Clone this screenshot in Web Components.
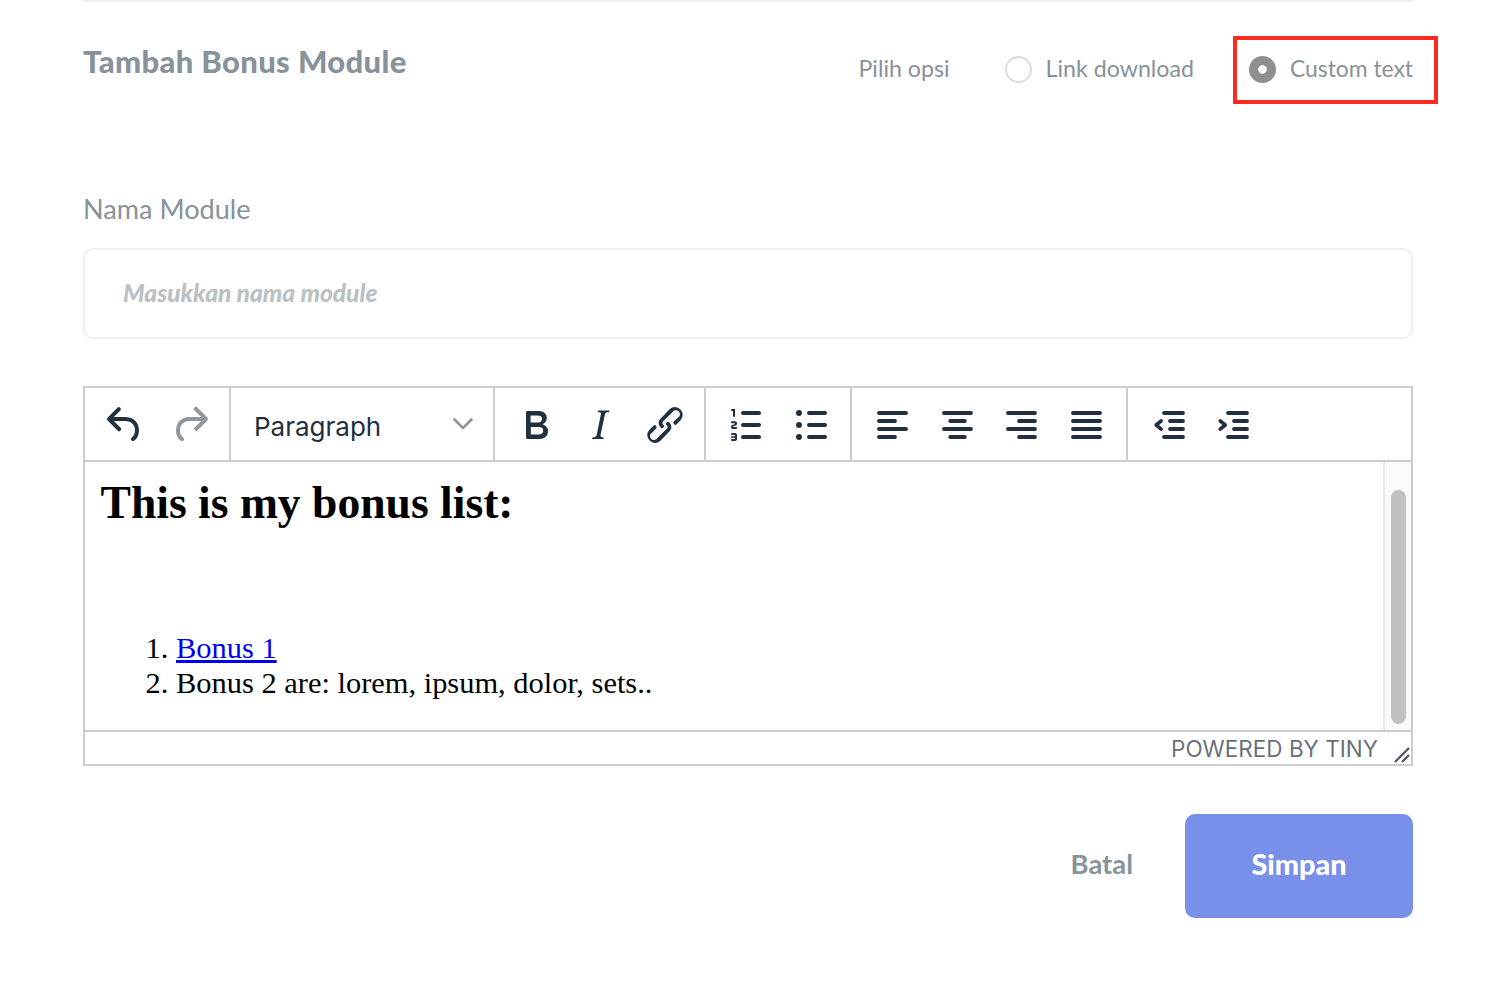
<!DOCTYPE html>
<html lang="id">
<head>
<meta charset="utf-8">
<title>Tambah Bonus Module</title>
<style>
  html, body { margin: 0; background: #fff; overflow: hidden; }
  body { font-family: Lato, "Liberation Sans", sans-serif; }
</style>
</head>
<body>
<bonus-form></bonus-form>

<script>
const ICONS = {
  undo: '<path d="M6.4 8H12c3.7 0 6.2 2 6.8 5.1.6 2.7-.4 5.6-2.3 6.8a1 1 0 0 1-1-1.8c1.1-.6 1.8-2.7 1.4-4.6-.5-2.1-2.1-3.5-4.9-3.5H6.4l3.3 3.3a1 1 0 1 1-1.4 1.4l-5-5a1 1 0 0 1 0-1.4l5-5a1 1 0 0 1 1.4 1.4L6.4 8z"/>',
  redo: '<path d="M17.6 10H12c-2.8 0-4.4 1.4-4.9 3.5-.4 2 .3 4 1.4 4.6a1 1 0 1 1-1 1.8c-2-1.2-2.9-4.1-2.3-6.8.6-3 3-5.1 6.8-5.1h5.6l-3.3-3.3a1 1 0 1 1 1.4-1.4l5 5a1 1 0 0 1 0 1.4l-5 5a1 1 0 0 1-1.4-1.4l3.3-3.3z"/>',
  bold: '<path d="M7.8 19c-.3 0-.5 0-.6-.2l-.2-.5V5.7c0-.2 0-.4.2-.5l.6-.2h5c1.5 0 2.7.3 3.5 1 .7.6 1.1 1.4 1.1 2.5a3 3 0 0 1-.6 1.9c-.4.6-1 1-1.6 1.2.4.1.9.3 1.3.6s.8.7 1 1.2c.4.4.5 1 .5 1.6 0 1.3-.4 2.3-1.3 3-.8.7-2.1 1-3.8 1H7.8zm5-8.3c.6 0 1.2-.1 1.6-.5.4-.3.6-.7.6-1.3 0-1.1-.8-1.7-2.3-1.7H9.3v3.5h3.4zm.5 6c.7 0 1.3-.1 1.7-.4.4-.4.6-.9.6-1.5s-.2-1-.7-1.4c-.4-.3-1-.4-2-.4H9.4v3.8h4z"/>',
  italic: '<path d="M16.7 4.7l-.1.9h-.3c-.6 0-1 0-1.4.3-.3.3-.4.6-.5 1.1l-2.1 9.8v.6c0 .5.4.8 1.4.8h.2l-.2.8H8l.2-.8h.2c1.1 0 1.8-.5 2-1.5l2-9.8.1-.5c0-.6-.4-.8-1.4-.8h-.3l.2-.9h5.8z"/>',
  link: '<path d="M6.2 12.3a1 1 0 0 1 1.4 1.4l-2 2a2 2 0 1 0 2.6 2.8l4.8-4.8a1 1 0 0 0 0-1.4 1 1 0 1 1 1.4-1.3 2.9 2.9 0 0 1 0 4L9.6 20a3.9 3.9 0 0 1-5.5-5.5l2-2zm11.6-.6a1 1 0 0 1-1.4-1.4l2.1-2a2 2 0 1 0-2.7-2.8L11 10.3a1 1 0 0 0 0 1.4A1 1 0 1 1 9.6 13a2.9 2.9 0 0 1 0-4L14.4 4a3.9 3.9 0 0 1 5.5 5.5l-2 2z"/>',
  numlist: '<path d="M10 17h8c.6 0 1 .4 1 1s-.4 1-1 1h-8a1 1 0 0 1 0-2zm0-6h8c.6 0 1 .4 1 1s-.4 1-1 1h-8a1 1 0 0 1 0-2zm0-6h8c.6 0 1 .4 1 1s-.4 1-1 1h-8a1 1 0 1 1 0-2zM6 4v3.5c0 .3-.2.5-.5.5a.5.5 0 0 1-.5-.5V5h-.5a.5.5 0 0 1 0-1H6zm-1 8.8l.2.2h1.3c.3 0 .5.2.5.5s-.2.5-.5.5H4.9a1 1 0 0 1-.9-1V13c0-.4.3-.8.6-1l1.2-.4.2-.3a.2.2 0 0 0-.2-.2H4.5a.5.5 0 0 1-.5-.5c0-.3.2-.5.5-.5h1.6c.5 0 .9.4.9 1v.1c0 .4-.3.8-.6 1l-1.2.4-.2.3zM7 17v2c0 .6-.4 1-1 1H4.5a.5.5 0 0 1 0-1h1.2c.2 0 .3-.1.3-.3 0-.2-.1-.3-.3-.3H4.4a.4.4 0 1 1 0-.8h1.3c.2 0 .3-.1.3-.3 0-.2-.1-.3-.3-.3H4.5a.5.5 0 1 1 0-1H6c.6 0 1 .4 1 1z"/>',
  bullist: '<path d="M11 5h8c.6 0 1 .4 1 1s-.4 1-1 1h-8a1 1 0 0 1 0-2zm0 6h8c.6 0 1 .4 1 1s-.4 1-1 1h-8a1 1 0 0 1 0-2zm0 6h8c.6 0 1 .4 1 1s-.4 1-1 1h-8a1 1 0 0 1 0-2z"/><circle cx="6" cy="6" r="1.5"/><circle cx="6" cy="12" r="1.5"/><circle cx="6" cy="18" r="1.5"/>',
  alignleft: lines([[5.5,19],[5.5,13.5],[5.5,19],[5.5,13.5]]),
  aligncenter: lines([[5.5,19],[8.6,15.9],[5.5,19],[8.6,15.9]]),
  alignright: lines([[5.5,19],[11,19],[5.5,19],[11,19]]),
  alignjustify: lines([[5.5,19],[5.5,19],[5.5,19],[5.5,19]]),
  outdent: lines([[9.5,19],[12.5,19],[12.5,19],[9.5,19]]) + '<path d="M8.1 9.9 5.6 12l2.5 2.1" fill="none" stroke="currentColor" stroke-width="1.8" stroke-linecap="round" stroke-linejoin="round"/>',
  indent: lines([[9.5,19],[12.5,19],[12.5,19],[9.5,19]]) + '<path d="M5.6 9.9 8.1 12l-2.5 2.1" fill="none" stroke="currentColor" stroke-width="1.8" stroke-linecap="round" stroke-linejoin="round"/>'
};

function lines(rows) {
  const d = rows.map((r, i) => `M${r[0]} ${6 + i * 4}H${r[1]}`).join('');
  return `<path d="${d}" fill="none" stroke="currentColor" stroke-width="1.9" stroke-linecap="round"/>`;
}

class ToolButton extends HTMLElement {
  constructor() {
    super();
    this.attachShadow({ mode: 'open' });
  }

  connectedCallback() {
    const icon = this.getAttribute('icon');
    this.shadowRoot.innerHTML = `
      <style>
        :host {
          display: flex;
          flex: 0 0 64.5px;
          height: 100%;
          align-items: center;
          justify-content: center;
          color: #222f3e;
        }
        :host([disabled]) { color: rgba(34,47,62,.5); }
        svg { width: 48px; height: 48px; margin-top: 1px; fill: currentColor; display: block; }
      </style>
      <svg viewBox="0 0 24 24">${ICONS[icon] || ''}</svg>
    `;
  }
}
customElements.define('tool-button', ToolButton);

class ToolGroup extends HTMLElement {
  constructor() {
    super();
    this.attachShadow({ mode: 'open' });
    this.shadowRoot.innerHTML = `
      <style>
        :host {
          display: flex;
          align-items: center;
          height: 100%;
          box-sizing: border-box;
          width: var(--group-width, auto);
          padding-left: var(--group-pad, 8px);
          border-right: 2px solid #ccc;
        }
        :host([last]) { border-right: 0; flex: 1; }
      </style>
      <slot></slot>
    `;
  }
}
customElements.define('tool-group', ToolGroup);

class FormatSelect extends HTMLElement {
  constructor() {
    super();
    this.attachShadow({ mode: 'open' });
    this.shadowRoot.innerHTML = `
      <style>
        :host {
          display: flex;
          align-items: center;
          justify-content: space-between;
          box-sizing: border-box;
          width: 264px;
          height: 100%;
          padding: 4px 20px 0 23px;
          border-right: 2px solid #ccc;
          color: #222f3e;
          font: 400 26px Inter, "Liberation Sans", sans-serif;
        }
        svg { width: 20px; height: 12px; margin-top: -5px; display: block; }
      </style>
      <span><slot></slot></span>
      <svg viewBox="0 0 20 12"><path d="M1.5 1.5 10 10l8.5-8.5" fill="none" stroke="#8f969e" stroke-width="2.6" stroke-linecap="round" stroke-linejoin="round"/></svg>
    `;
  }
}
customElements.define('format-select', FormatSelect);

class RichEditor extends HTMLElement {
  constructor() {
    super();
    this.attachShadow({ mode: 'open' });
    this.shadowRoot.innerHTML = `
      <style>
        :host {
          display: block;
          box-sizing: border-box;
          height: 380px;
          border: 2px solid #ccc;
          background: #fff;
        }
        .toolbar {
          display: flex;
          height: 72px;
          border-bottom: 2px solid #ccc;
        }
        .body { display: flex; height: 268px; }
        .content {
          flex: 1;
          min-width: 0;
          padding: 0 15.5px;
          color: #000;
          font-family: "Liberation Serif", "Times New Roman", serif;
          font-size: 30.45px;
          line-height: 35px;
        }
        h1 {
          margin: 15px 0 0;
          font-size: 45.6px;
          font-weight: 700;
          line-height: 52px;
        }
        ol { margin: 102px 0 0; padding-left: 75.5px; }
        a { color: #0000ee; text-decoration: underline; }
        .track {
          flex: 0 0 28px;
          box-sizing: border-box;
          padding: 28px 5px 6px 6px;
          background: #fafafa;
          border-left: 2px solid #e8e8e8;
        }
        .thumb { height: 100%; border-radius: 8px; background: #c1c1c1; }
        .status {
          display: flex;
          align-items: center;
          justify-content: flex-end;
          height: 34px;
          border-top: 2px solid #ccc;
          box-sizing: border-box;
          color: rgba(34,47,62,.7);
          font: 400 22.5px Inter, "Liberation Sans", sans-serif;
        }
        .status svg { width: 16px; height: 16px; margin: 14px 1px 0 16px; display: block; }
      </style>
      <div class="toolbar">
        <tool-group style="--group-width:146px"><tool-button icon="undo"></tool-button><tool-button icon="redo" disabled></tool-button></tool-group>
        <format-select>Paragraph</format-select>
        <tool-group style="--group-width:211px;--group-pad:8.5px"><tool-button icon="bold"></tool-button><tool-button icon="italic"></tool-button><tool-button icon="link"></tool-button></tool-group>
        <tool-group style="--group-width:146px;--group-pad:8.5px"><tool-button icon="numlist"></tool-button><tool-button icon="bullist"></tool-button></tool-group>
        <tool-group style="--group-width:276px"><tool-button icon="alignleft"></tool-button><tool-button icon="aligncenter"></tool-button><tool-button icon="alignright"></tool-button><tool-button icon="alignjustify"></tool-button></tool-group>
        <tool-group last style="--group-pad:8.5px"><tool-button icon="outdent"></tool-button><tool-button icon="indent"></tool-button></tool-group>
      </div>
      <div class="body">
        <div class="content">
          <h1>This is my bonus list:</h1>
          <ol>
            <li><a href="#">Bonus 1</a></li>
            <li>Bonus 2 are: lorem, ipsum, dolor, sets..</li>
          </ol>
        </div>
        <div class="track"><div class="thumb"></div></div>
      </div>
      <div class="status">
        <span>POWERED BY TINY</span>
        <svg viewBox="0 0 16 16"><path d="M1 15 15 1M8 15l7-7" fill="none" stroke="#4e5966" stroke-width="2.3"/></svg>
      </div>
    `;
  }
}
customElements.define('rich-editor', RichEditor);

class RadioOption extends HTMLElement {
  constructor() {
    super();
    this.attachShadow({ mode: 'open' });
    this.shadowRoot.innerHTML = `
      <style>
        :host {
          display: flex;
          align-items: center;
          gap: 14px;
          position: relative;
          color: #87929a;
          font-size: 23.2px;
        }
        :host([checked]) { font-size: 22.85px; }
        .dot {
          box-sizing: border-box;
          width: 27px;
          height: 27px;
          border-radius: 50%;
          border: 2px solid #dcdcdc;
          background: #fff;
        }
        .label { margin-top: -2px; }
        :host([checked]) .dot {
          border: 0;
          background: radial-gradient(circle, #fff 0 4px, #8e8f93 4.6px);
        }
        :host([marked])::after {
          content: "";
          position: absolute;
          left: -16px;
          right: -25px;
          top: -20px;
          bottom: -21px;
          border: 4px solid #fb2c1f;
        }
      </style>
      <span class="dot"></span>
      <span class="label"><slot></slot></span>
    `;
  }
}
customElements.define('radio-option', RadioOption);

class TextField extends HTMLElement {
  constructor() {
    super();
    this.attachShadow({ mode: 'open' });
    const label = this.getAttribute('label') || '';
    const placeholder = this.getAttribute('placeholder') || '';
    this.shadowRoot.innerHTML = `
      <style>
        :host { display: block; }
        label {
          display: block;
          height: 55px;
          color: #87929a;
          font-size: 27.1px;
          line-height: 32px;
        }
        .box {
          box-sizing: border-box;
          height: 91px;
          display: flex;
          align-items: center;
          padding: 0 38px 2px;
          border: 2px solid #eee;
          border-radius: 10px;
          color: #b9c1c5;
          font-size: 24.5px;
          font-style: italic;
          font-weight: 900;
        }
      </style>
      <label>${label}</label>
      <div class="box">${placeholder}</div>
    `;
  }
}
customElements.define('text-field', TextField);

class BonusForm extends HTMLElement {
  constructor() {
    super();
    this.attachShadow({ mode: 'open' });
    this.shadowRoot.innerHTML = `
      <style>
        :host {
          display: block;
          box-sizing: border-box;
          height: 996px;
          padding: 0 77px 0 83px;
          font-family: Lato, "Liberation Sans", sans-serif;
        }
        .rule { height: 2px; background: #eee; }
        header {
          display: flex;
          justify-content: space-between;
          height: 191px;
          box-sizing: border-box;
          padding-top: 40px;
        }
        h2 {
          margin: 0;
          color: #87929a;
          font-size: 31px;
          font-weight: 900;
          letter-spacing: .35px;
          line-height: 38px;
        }
        .options {
          display: flex;
          align-items: center;
          gap: 55px;
          height: 28px;
          margin-top: 13px;
          color: #87929a;
          font-size: 23.2px;
        }
        .options > span { margin-top: -2px; }
        text-field { margin-bottom: 47px; }
        .actions {
          display: flex;
          justify-content: flex-end;
          align-items: center;
          gap: 52px;
          margin-top: 48px;
        }
        .cancel { color: #87929a; font-size: 27.4px; font-weight: 700; padding-bottom: 6px; }
        .save {
          display: flex;
          align-items: center;
          justify-content: center;
          box-sizing: border-box;
          width: 228px;
          height: 104px;
          padding-bottom: 5px;
          border-radius: 10px;
          background: #7890ea;
          color: #fff;
          font-size: 28.8px;
          font-weight: 900;
        }
      </style>
      <div class="rule"></div>
      <header>
        <h2>Tambah Bonus Module</h2>
        <div class="options">
          <span>Pilih opsi</span>
          <radio-option>Link download</radio-option>
          <radio-option checked marked>Custom text</radio-option>
        </div>
      </header>
      <text-field label="Nama Module" placeholder="Masukkan nama module"></text-field>
      <rich-editor></rich-editor>
      <div class="actions">
        <span class="cancel">Batal</span>
        <span class="save">Simpan</span>
      </div>
    `;
  }
}
customElements.define('bonus-form', BonusForm);
</script>
</body>
</html>
